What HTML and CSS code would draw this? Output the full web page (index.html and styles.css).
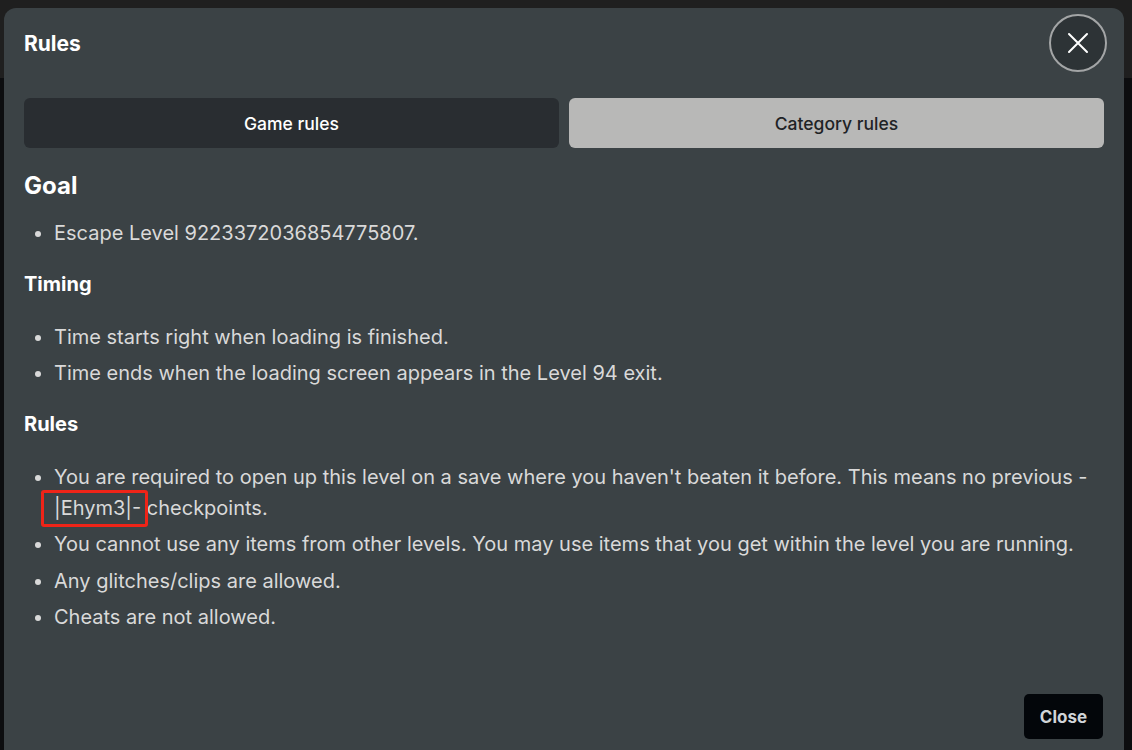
FILE: index.html
```html
<!DOCTYPE html>
<html lang="en">
<head>
<meta charset="utf-8">
<title>Rules</title>
<link rel="stylesheet" href="styles.css">
</head>
<body>
<div class="backdrop">
  <div class="topbar"></div>
</div>
<div class="modal">
  <div class="modal-header">
    <h2 class="modal-title">Rules</h2>
    <button class="icon-close" aria-label="Close">
      <svg width="22" height="22" viewBox="0 0 22 22"><path d="M2 2 L20 20 M20 2 L2 20" stroke="#ffffff" stroke-width="2" stroke-linecap="round" fill="none"/></svg>
    </button>
  </div>
  <div class="tabs">
    <button class="tab tab-active">Game rules</button>
    <button class="tab tab-inactive">Category rules</button>
  </div>
  <div class="content">
    <h3 class="h-goal">Goal</h3>
    <ul>
      <li>Escape Level 9223372036854775807.</li>
    </ul>
    <h4 class="h-sub">Timing</h4>
    <ul>
      <li>Time starts right when loading is finished.</li>
      <li>Time ends when the loading screen appears in the Level 94 exit.</li>
    </ul>
    <h4 class="h-sub">Rules</h4>
    <ul>
      <li>You are required to open up this level on a save where you haven't beaten it before. This means no previous -<br><span class="mark">|Ehym3|-</span> checkpoints.</li>
      <li>You cannot use any items from other levels. You may use items that you get within the level you are running.</li>
      <li>Any glitches/clips are allowed.</li>
      <li>Cheats are not allowed.</li>
    </ul>
  </div>
  <div class="footer">
    <button class="btn-close">Close</button>
  </div>
</div>
</body>
</html>
```

FILE: styles.css
```css
html, body {
  margin: 0;
  padding: 0;
  height: 100%;
  overflow: hidden;
}
body {
  background: #0c0d0f;
  font-family: "Inter", "Liberation Sans", sans-serif;
  position: relative;
}
.backdrop {
  position: absolute;
  inset: 0;
}
.topbar {
  height: 78px;
  background: #1f1f1f;
}
.modal {
  position: absolute;
  left: 4px;
  top: 8px;
  width: 1120px;
  height: 760px;
  box-sizing: border-box;
  background: #3b4245;
  border-radius: 12px;
  padding: 6px 20px 0 20px;
  color: #dcdcdc;
}
.modal-header {
  display: flex;
  align-items: center;
  justify-content: space-between;
  height: 58px;
}
.modal-title {
  margin: 0;
  font-size: 21px;
  font-weight: 700;
  color: #ffffff;
}
.icon-close {
  width: 58px;
  height: 58px;
  margin-right: -3px;
  border-radius: 50%;
  border: 2px solid #a3a5a6;
  background: #2d3336;
  display: flex;
  align-items: center;
  justify-content: center;
  padding: 0;
}
.tabs {
  display: grid;
  grid-template-columns: 1fr 1fr;
  gap: 10px;
  margin-top: 26px;
}
.tab {
  height: 50px;
  border: none;
  border-radius: 6px;
  font-family: "Inter", "Liberation Sans", sans-serif;
  font-size: 17.5px;
  font-weight: 500;
  padding: 0;
}
.tab-active {
  background: #292d31;
  color: #ffffff;
}
.tab-inactive {
  background: #b8b8b7;
  color: #1f2326;
}
.content {
  padding-top: 23px;
}
.h-goal {
  margin: 0 0 17px 0;
  font-size: 24px;
  line-height: 30px;
  font-weight: 700;
  color: #ffffff;
}
.h-sub {
  margin: 22px 0 24.5px 0;
  font-size: 20px;
  line-height: 26px;
  font-weight: 700;
  color: #ffffff;
}
ul {
  margin: 0;
  padding-left: 30px;
  list-style: disc;
}
li {
  font-size: 20px;
  line-height: 31px;
  margin-bottom: 5.6px;
  color: #d9d9d9;
}
.mark {
  position: relative;
}
.mark::after {
  content: "";
  position: absolute;
  left: -13px;
  right: -7px;
  top: -6px;
  bottom: -7px;
  border: 3px solid #ef2418;
  border-radius: 3px;
}
.footer {
  position: absolute;
  right: 21px;
  top: 686px;
}
.btn-close {
  width: 79px;
  height: 45px;
  border: none;
  border-radius: 5px;
  background: #03060a;
  color: #d0d4d8;
  font-family: "Inter", "Liberation Sans", sans-serif;
  font-size: 17px;
  font-weight: 700;
}
```
